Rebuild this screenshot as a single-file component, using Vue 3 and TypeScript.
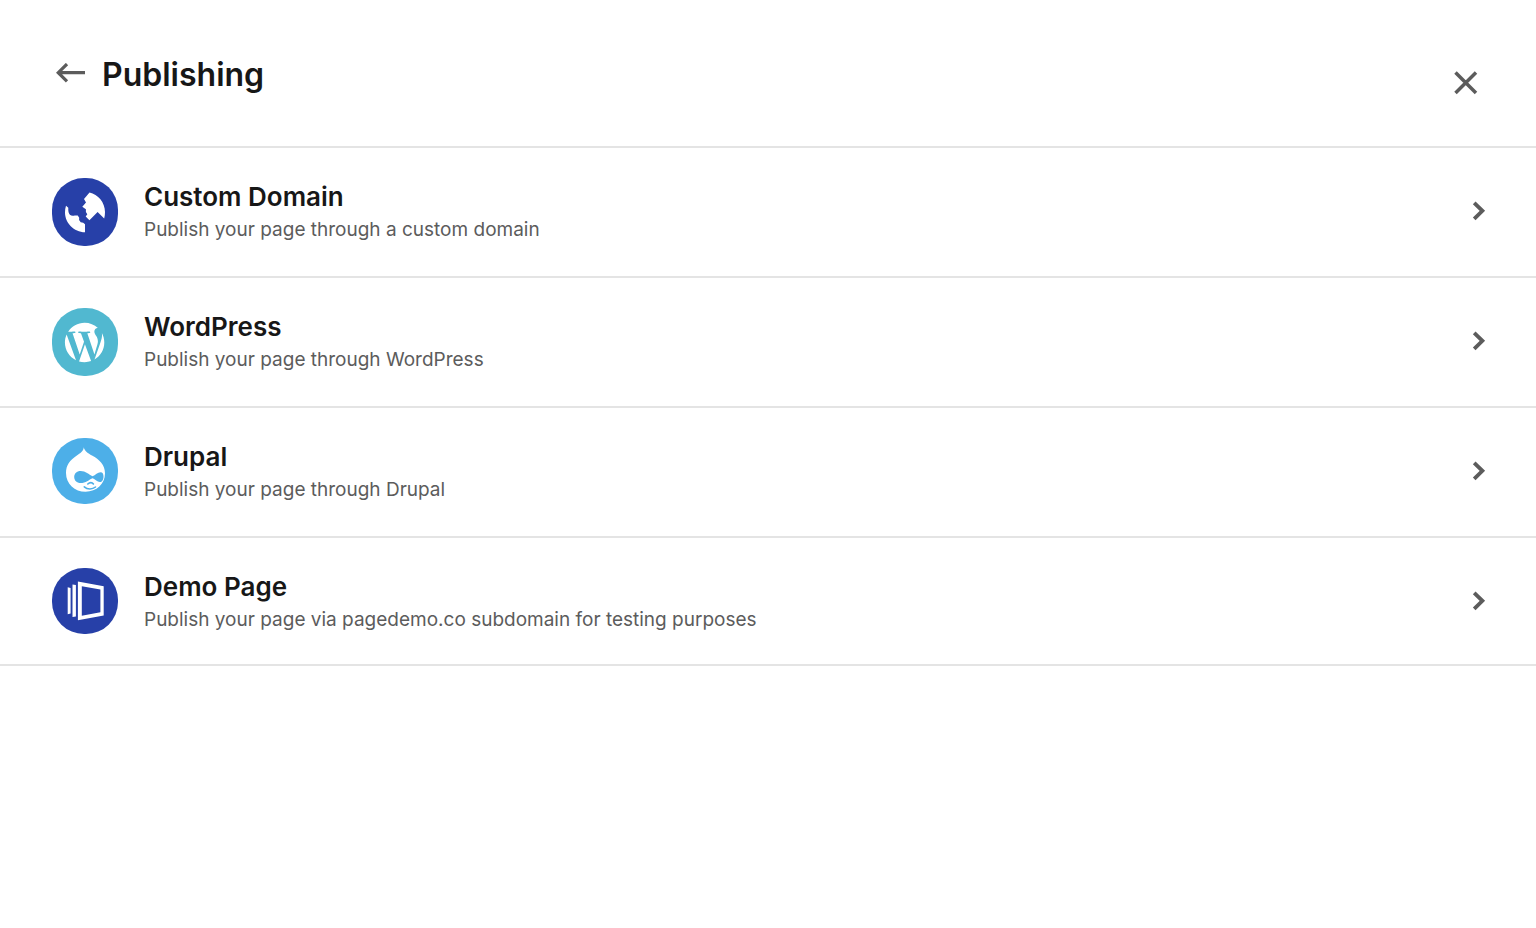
<script setup lang="ts">
type IconName = 'domain' | 'wordpress' | 'drupal' | 'demo'

interface PublishOption {
  icon: IconName
  title: string
  description: string
}

const options: PublishOption[] = [
  { icon: 'domain', title: 'Custom Domain', description: 'Publish your page through a custom domain' },
  { icon: 'wordpress', title: 'WordPress', description: 'Publish your page through WordPress' },
  { icon: 'drupal', title: 'Drupal', description: 'Publish your page through Drupal' },
  { icon: 'demo', title: 'Demo Page', description: 'Publish your page via pagedemo.co subdomain for testing purposes' },
]
</script>

<template>
  <main class="panel">
    <header class="header">
      <button class="icon-button back" type="button" aria-label="Back">
        <svg width="30" height="20" viewBox="0 0 30 20" fill="none" stroke="currentColor" stroke-width="3.200">
          <path d="M29 9.700H2.500M11 1L2.200 9.700l8.800 8.700" />
        </svg>
      </button>
      <h1 class="title">Publishing</h1>
      <button class="icon-button close" type="button" aria-label="Close">
        <svg width="24" height="24" viewBox="0 0 24 24" fill="none" stroke="currentColor" stroke-width="3.500">
          <path d="M1.500 1.500l20.500 20.500M22 1.500l-20.500 20.500" />
        </svg>
      </button>
    </header>

    <ul class="options">
      <li v-for="option in options" :key="option.title" class="item">
        <button class="option" type="button">
          <span class="badge" :class="option.icon">
            <svg v-if="option.icon === 'domain'" width="66" height="68" viewBox="0 0 66 68" fill="#fff">
              <path d="M37.500 14.600C46 16.500 53 24.500 53 34c0 2.300-.2 4.500-.8 6.500L45.600 34l-8.200 8.300-3.700-3.900 1.600-2.200-1.400-2.300v-2.600l-3.600-2.600 3.700-4.300-2-3.500 3-3.400z" />
              <path d="M14 27.800l2.300 2c-.2 3.200.3 5.600 1.600 7 1.300 1.100 3.200 1.200 4.900.6h2.900l1.500 2.400-.1 2.300 1.600 2.200 2.500.4 1.800 1.600v8C21.800 54 13 45 13 34.500c0-2.400.3-4.600 1-6.700z" />
            </svg>
            <svg v-else-if="option.icon === 'wordpress'" width="66" height="68" viewBox="0 0 66 68" fill="#fff">
              <path
                transform="translate(10 11.900) scale(.0883)"
                d="M33 256c0-32.300 6.900-63 19.300-90.700l106.400 291.400C84.300 420.500 33 344.200 33 256zm223 223c-21.900 0-43-3.200-63-9.100l66.900-194.400 68.500 187.800c.5 1.100 1 2.100 1.600 3.100-23.100 8.100-48 12.600-74 12.600zm30.700-327.500c13.400-.7 25.500-2.100 25.500-2.100 12-1.400 10.600-19.100-1.400-18.400 0 0-36.100 2.800-59.400 2.800-21.900 0-58.700-2.800-58.700-2.800-12-.7-13.400 17.700-1.400 18.400 0 0 11.400 1.400 23.400 2.100l34.700 95.200L200.600 393l-81.200-241.500c13.400-.7 25.500-2.100 25.500-2.100 12-1.400 10.600-19.100-1.400-18.400 0 0-36.100 2.800-59.400 2.800-4.200 0-9.100-.1-14.400-.3C109.600 73 178.100 33 256 33c58 0 110.900 22.200 150.600 58.500-1-.1-1.900-.2-2.900-.2-21.900 0-37.400 19.100-37.400 39.600 0 18.400 10.600 33.900 21.900 52.300 8.500 14.800 18.400 33.900 18.400 61.500 0 19.100-7.300 41.200-17 72.100l-22.200 74.300-80.700-239.600zm81.400 297.200l68.100-196.900c12.700-31.800 17-57.200 17-79.900 0-8.200-.5-15.800-1.500-22.900 17.400 31.800 27.300 68.200 27.300 107 0 82.300-44.600 154.100-110.900 192.700z"
              />
            </svg>
            <svg v-else-if="option.icon === 'drupal'" width="66" height="66" viewBox="0 0 66 66" fill="none">
              <path fill="#fff" d="M31.800 9.300c.8 3.900 4.200 6 8.200 8.200C47.500 21.600 53 27 53 35.300 53 46.200 44.500 53.700 33.600 53.700S14 45.700 14 34.900c0-7.700 4-12.900 10.500-17.200 4-2.600 6.800-4.300 7.300-8.400z" />
              <path fill="#4dafe8" d="M28.600 33c5 0 8.300 3.500 11.900 5.300 2.900-1.300 5.200-4.100 8-4.100 2.300 0 3 2 3 4.500 0 3-1.400 5.300-3.700 5.300-2.600 0-4.600-2.900-7.100-3.800-3.700 1.400-7 4.900-12 4.900-4 0-6.500-2.600-6.500-6 0-3.600 2.600-6.100 6.400-6.100z" />
              <path stroke="#4dafe8" stroke-width="1.600" stroke-linecap="round" d="M35.800 46c2-1.900 4.300-1.900 5.600 0M32.300 48.800c3 2.800 8 2.800 11.200.2" />
            </svg>
            <svg v-else width="66" height="66" viewBox="0 0 66 66" fill="#fff">
              <path d="M15.700 19.300l2.900.8v25.300l-2.900.8zM20.500 16.500l3.400.6v31.300l-3.400.6z" />
              <path fill-rule="evenodd" d="M25.900 13.600l25.800 4.600v29.300l-25.800 4.700zM29.800 18.300v29.400l18.600-3.500V21.500z" />
            </svg>
          </span>
          <span class="text">
            <span class="name">{{ option.title }}</span>
            <span class="description">{{ option.description }}</span>
          </span>
          <svg class="chevron" width="14" height="20" viewBox="0 0 14 20" fill="none" stroke="currentColor" stroke-width="3.800" aria-hidden="true">
            <path d="M2.200 1.800l8.200 8-8.200 8" />
          </svg>
        </button>
      </li>
    </ul>
  </main>
</template>

<style>
body {
  margin: 0;
  background: #fff;
}
</style>

<style scoped>
.panel {
  font-family: Inter, "Liberation Sans", sans-serif;
  color: #171717;
}

.header {
  display: flex;
  align-items: flex-start;
  padding: 52px 56px 48px;
  border-bottom: 2px solid #e4e4e4;
}

.icon-button {
  display: flex;
  padding: 0;
  border: 0;
  background: none;
  color: #5c5c5c;
  cursor: pointer;
}

.back {
  margin: 11px 16px 0 0;
}

.close {
  margin: 19px 2px 0 auto;
}

.title {
  margin: 0;
  font-size: 32px;
  line-height: 46px;
  font-weight: 600;
}

.options {
  margin: 0;
  padding: 0;
  list-style: none;
}

.item {
  border-bottom: 2px solid #e4e4e4;
}

.option {
  display: flex;
  align-items: flex-start;
  box-sizing: border-box;
  width: 100%;
  min-height: 128px;
  padding: 30px 50px 30px 52px;
  border: 0;
  background: none;
  color: inherit;
  font: inherit;
  text-align: left;
  cursor: pointer;
}

.item:last-child .option {
  min-height: 126px;
}

.badge {
  display: flex;
  flex: none;
  margin-right: 26px;
  border-radius: 32px;
  overflow: hidden;
}

.domain,
.demo {
  background: #2740a8;
}

.wordpress {
  background: #51b8d0;
}

.drupal {
  background: #4dafe8;
}

.text {
  display: flex;
  flex: 1;
  flex-direction: column;
  min-width: 0;
}

.name {
  font-size: 26px;
  line-height: 38px;
  font-weight: 600;
}

.description {
  color: #5c5c5c;
  font-size: 19px;
  line-height: 28px;
}

.chevron {
  flex: none;
  margin-top: 23px;
  color: #5c5c5c;
}
</style>
